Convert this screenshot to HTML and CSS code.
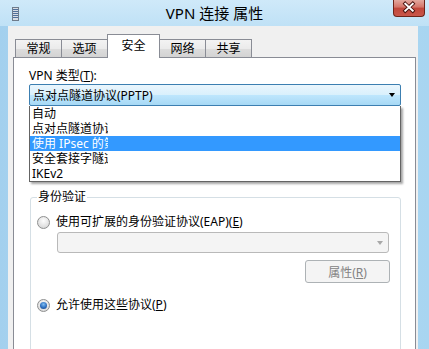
FILE: index.html
```html
<!DOCTYPE html>
<html lang="zh-CN">
<head>
  <meta charset="UTF-8">
  <title>VPN 连接 属性</title>
  <link rel="stylesheet" href="styles.css">
</head>
<body>

<div class="window">
  <div class="titlebar">
    <div class="tb-left">
      <svg class="app-icon" width="7" height="14" viewBox="0 0 7 14">
        <rect x="0.5" y="0.5" width="6" height="13" fill="#d8dde4" stroke="#6f7c8c"/>
        <rect x="1" y="2" width="5" height="1" fill="#4f6f9a"/>
        <rect x="1" y="4" width="5" height="1" fill="#4f6f9a"/>
        <rect x="1" y="6" width="5" height="1" fill="#4f6f9a"/>
        <rect x="1" y="8" width="5" height="1" fill="#4f6f9a"/>
        <rect x="1" y="10" width="5" height="1" fill="#4f6f9a"/>
      </svg>
    </div>
    <div class="title">VPN 连接 属性</div>
    <div class="tb-right">
      <div class="close">
        <svg width="32" height="17" viewBox="0 0 32 17">
          <path d="M12 4.5 L20 12 M20 4.5 L12 12" stroke="#4a1410" stroke-width="4" stroke-linecap="square"/>
          <path d="M12 4.5 L20 12 M20 4.5 L12 12" stroke="#fff" stroke-width="2" stroke-linecap="square"/>
        </svg>
      </div>
    </div>
  </div>

  <div class="client">
    <div class="tabs">
      <div class="tab">常规</div>
      <div class="tab">选项</div>
      <div class="tab active">安全</div>
      <div class="tab">网络</div>
      <div class="tab">共享</div>
    </div>

    <div class="page">
      <div class="label">VPN 类型(<u>T</u>):</div>
      <div class="combo-wrap">
        <div class="combo open">
          <span>点对点隧道协议(PPTP)</span>
          <i class="arrow"></i>
        </div>
        <ul class="droplist">
          <li><span>自动</span></li>
          <li><span>点对点隧道协议(PPTP)</span></li>
          <li class="hot"><span>使用 IPsec 的第 2 层隧道协议(L2TP/IPsec)</span></li>
          <li><span>安全套接字隧道协议(SSTP)</span></li>
          <li><span>IKEv2</span></li>
        </ul>
      </div>

      <fieldset class="group">
        <legend>身份验证</legend>
        <div class="radio-row"><span class="radio"></span><span>使用可扩展的身份验证协议(EAP)(<u>E</u>)</span></div>
        <div class="combo disabled"><i class="arrow"></i></div>
        <div class="btn-row"><button disabled>属性(<u>R</u>)</button></div>
        <div class="radio-row second"><span class="radio checked"></span><span>允许使用这些协议(<u>P</u>)</span></div>
      </fieldset>
    </div>
  </div>
</div>

</body>
</html>
```

FILE: styles.css
```css
body {
  margin: 0;
  font-family: "Noto Sans", "Noto Sans CJK SC", sans-serif;
  font-size: 12px;
  color: #000;
  overflow: hidden;
}

.window {
  width: 429px;
  height: 349px;
  display: flex;
  flex-direction: column;
  background: linear-gradient(to right, #a3d0ee 0, #b9def4 40%, #a8d5f1 100%);
  overflow: hidden;
}

/* title bar */
.titlebar {
  height: 27px;
  display: grid;
  grid-template-columns: 1fr auto 1fr;
  background: linear-gradient(to bottom, #cfe9f9, #bfe1f6);
}

.tb-left {
  display: flex;
  align-items: flex-start;
}

.app-icon {
  margin: 7px 0 0 12px;
}

.title {
  font-size: 15px;
  line-height: 26px;
  color: #000;
}

.tb-right {
  display: flex;
  justify-content: flex-end;
  align-items: flex-start;
}

.close {
  width: 32px;
  height: 17px;
  margin-right: 4px;
  box-sizing: border-box;
  border: 1px solid #6d2419;
  border-top: none;
  border-radius: 0 0 4px 4px;
  background: linear-gradient(to bottom, #e3a89e 0, #d47468 45%, #c1463a 50%, #c9574a 100%);
  display: flex;
  justify-content: center;
}

.close svg {
  display: block;
  margin-top: -1px;
}

/* client area */
.client {
  flex: 1;
  margin: 0 11px 0 8px;
  background: #f0f0f0;
  padding: 8px 2px 0 5px;
  display: flex;
  flex-direction: column;
}

.tabs {
  display: flex;
  align-items: flex-end;
  padding-left: 2px;
  position: relative;
  z-index: 1;
}

.tab {
  box-sizing: border-box;
  width: 47px;
  height: 18px;
  line-height: 17px;
  text-align: center;
  border: 1px solid #898c95;
  border-bottom: none;
  background: linear-gradient(to bottom, #f3f3f3 0, #ebebeb 50%, #dddddd 51%, #d3d3d3 100%);
}

.tab + .tab {
  margin-left: -1px;
}

.tab.active {
  width: 53px;
  height: 24px;
  line-height: 22px;
  margin-bottom: -1px;
  background: #fff;
  position: relative;
  z-index: 2;
}

.page {
  flex: 1;
  background: #fff;
  border: 1px solid #898c95;
  border-bottom: none;
  padding: 10px 14px 0 15px;
  overflow: hidden;
}

.label {
  line-height: 16px;
}

/* combo box */
.combo-wrap {
  position: relative;
  z-index: 3;
}

.combo {
  box-sizing: border-box;
  height: 22px;
  display: flex;
  align-items: center;
  padding-left: 3px;
  border-radius: 2px;
}

.combo.open {
  border: 1px solid #3c7fb1;
  background: linear-gradient(to bottom, #eaf6fd 0, #d9f0fc 50%, #bee6fd 51%, #a7d9f5 100%);
}

.arrow {
  width: 0;
  height: 0;
  margin-left: auto;
  margin-right: 5px;
  border-top: 4px solid #000;
  border-left: 3.5px solid transparent;
  border-right: 3.5px solid transparent;
}

.droplist {
  position: absolute;
  top: 100%;
  left: 0;
  right: 0;
  margin: 0;
  padding: 0;
  list-style: none;
  background: #fff;
  border: 1px solid #646464;
  border-top: none;
  box-shadow: 2px 2px 2px rgba(0, 0, 0, 0.35);
}

.droplist li {
  height: 15px;
  line-height: 15px;
  padding-left: 2px;
}

.droplist li span {
  display: inline-block;
  max-width: 76px;
  overflow: hidden;
  white-space: nowrap;
  vertical-align: top;
}

.droplist li.hot {
  background: #3399ff;
  color: #fff;
}

/* group box */
.group {
  margin: 83px 0 0 1px;
  border: 1px solid #d5dfe5;
  border-radius: 3px;
  padding: 9px 0 60px 6px;
  min-width: 0;
}

.group legend {
  padding: 0 1px;
  line-height: 16px;
}

.radio-row {
  display: flex;
  align-items: center;
  gap: 6px;
  line-height: 16px;
}

.radio-row.second {
  margin-top: 14px;
}

.radio {
  box-sizing: border-box;
  width: 13px;
  height: 13px;
  border-radius: 50%;
  border: 1px solid #8e8f8f;
  background: radial-gradient(circle at 50% 35%, #fdfdfd 0, #e2e2e2 60%, #cfcfcf 100%);
  display: flex;
  align-items: center;
  justify-content: center;
}

.radio.checked::after {
  content: "";
  width: 7px;
  height: 7px;
  border-radius: 50%;
  background: radial-gradient(circle at 50% 35%, #7fbdf1 0, #2d6fc0 55%, #173f7a 100%);
}

.combo.disabled {
  height: 21px;
  margin: 2px 11px 0 20px;
  border: 1px solid #b9b9b9;
  border-radius: 3px;
  background: #f4f4f4;
}

.combo.disabled .arrow {
  border-top-color: #a8a8a8;
  margin-right: 5px;
}

.btn-row {
  display: flex;
  justify-content: flex-end;
  margin: 7px 10px 0 0;
}

button {
  box-sizing: border-box;
  width: 85px;
  height: 23px;
  padding: 0;
  font-family: inherit;
  font-size: 12px;
  color: #838383;
  background: #f4f4f4;
  border: 1px solid #adb2b5;
  border-radius: 3px;
}
```
